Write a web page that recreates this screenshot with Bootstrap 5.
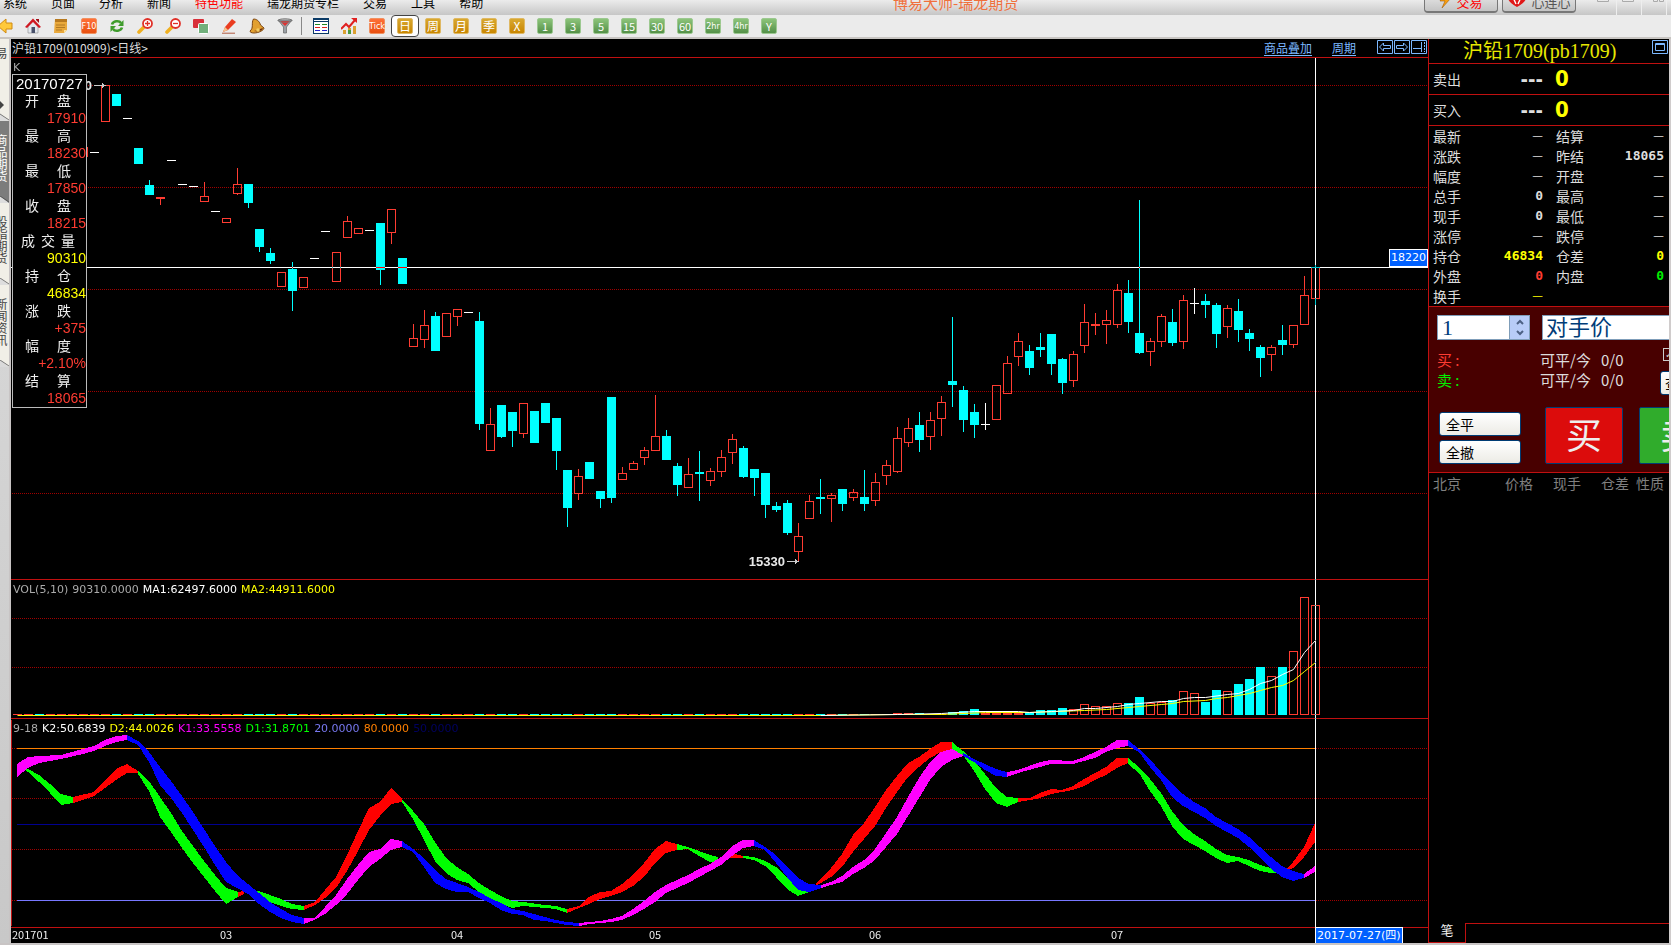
<!DOCTYPE html>
<html lang="zh-CN">
<head>
<meta charset="utf-8">
<meta name="viewport" content="width=device-width, initial-scale=1">
<title>博易大师-瑞龙期货</title>
<link href="https://cdn.jsdelivr.net/npm/bootstrap@5.3.0/dist/css/bootstrap.min.css" rel="stylesheet">
<style>
:root{--rule:#c01010;--up:#ff3c32;--down:#0ff;--cjk:"Noto Sans CJK SC",sans-serif;--tah:"DejaVu Sans","Noto Sans CJK SC",sans-serif}
body{font:12px/12px var(--cjk);background:#c8c4c4;color:#000;min-height:100vh;overflow:hidden}
button{border:0;background:none;padding:0;color:inherit;font:inherit}
svg{display:block;flex:none}
/* title and menu */
.menubar{height:15px;background:linear-gradient(#ececec,#c6c6c6);overflow:hidden}
.menubar nav{gap:24px;padding:0 0 6px 3px}
.menubar nav a{color:#000;text-decoration:none;white-space:nowrap}
.menubar nav a.hot{color:#f00}
.app-name{color:#f0703c;font-size:15px;line-height:16px;padding-bottom:4px;padding-left:4px}
.cap-btn{width:74px;height:26px;margin-bottom:2px;border:1px solid #777;border-bottom-width:2px;border-radius:4px;background:linear-gradient(#f4f4f4,#c4c4c4);font-size:13px;line-height:13px;padding-bottom:3px}
.win-btn{width:25px;height:15px;border-right:1px solid #eee}
/* toolbar */
.toolbar{height:24px;background:#ebebeb;border-bottom:2px solid #c8c5c2;padding-left:0;overflow:hidden}
.tool-row{margin-left:-9px}
.tool{width:28px;height:22px;display:flex;align-items:center;justify-content:center}
.tool-div{width:8px;height:18px;border-right:0}
.tool-div::before{content:"";display:block;width:1px;height:18px;margin-left:2px;background:#888}
.chip{width:16px;height:16px;border-radius:2px;color:#fff;display:flex;align-items:center;justify-content:center;font-size:12px;line-height:14px;background:linear-gradient(#d8a830,#c98600);border:1px solid #dfb863}
.chip.g{background:linear-gradient(#8cc47a,#549048);border-color:#9cc890;font-size:11px}
.chip.s{font:9px/14px "DejaVu Sans Condensed",sans-serif}
.chip.o{background:linear-gradient(#ff7038,#e85010);border-color:#f09060;font:9px/14px "DejaVu Sans Condensed",sans-serif}
.tool.active{border:1px solid #444;border-radius:4px;background:#fff}
/* left tabs */
.side{width:11px;border-right:2px solid #c8c4c4;background:linear-gradient(#dcdcdc,#c8c8c8);overflow:hidden}
.side button{display:flex;width:9px;height:82px;background:#f1efe7;color:#444;overflow:hidden;position:relative;align-items:center;justify-content:flex-end}
.side button span{writing-mode:vertical-rl;line-height:14px;margin-right:1px;margin-bottom:9px;text-orientation:upright}
.side button span.align-self-start{margin-top:8px}
.side button svg{position:absolute;left:0;bottom:0}
.side button.active{background:#7c7c7c;color:#fff}
/* charts */
.quote-area{background:#000;color:#ddd;overflow:hidden}
.chart-head{height:19px;border-bottom:1px solid var(--rule);padding-left:1px;line-height:17px}
.chart-head a{color:#7cb8ff;text-decoration:underline;text-underline-offset:2px}
.pane{border-bottom:1px solid var(--rule);overflow:hidden;position:relative}
.pane-vol{height:139px}.pane-kd{height:209px}.axis{height:15px}
.pane>svg,.axis>svg,.cross{width:100%;height:100%;shape-rendering:crispEdges}
.legend{position:absolute;left:2px;top:3px;font:11px/14px var(--tah);gap:4px}
.cross{position:absolute;left:0;top:0;mix-blend-mode:difference;pointer-events:none}
.tip{position:absolute;left:1px;top:16px;width:75px;border:1px solid #bbb;background:#000;margin:0}
.tip .day{font:15px/17px "Liberation Sans",sans-serif;color:#fff;padding-left:3px}
.tip dt{font:14px/17px var(--cjk);width:46px;margin:0 auto 0 12px;text-align-last:justify;color:#eee}
.tip dt.w3{width:54px;margin-left:8px}
.tip dd{font:14px/18px "Liberation Sans",sans-serif;margin:0;text-align:right;color:var(--up)}
.tip dd.y{color:#ff0}
.tag{position:absolute;background:#0060ff;color:#fff;border:1px solid #fff;font:11px/16px var(--tah);padding:0 1px}
/* quote panel */
.panel{width:243px;background:#000;border-left:1px solid var(--rule);border-right:2px solid #d0cccc;overflow:hidden;color:#ddd}
.panel h1{font:20px/20px "Liberation Serif","Noto Sans CJK SC",serif;color:#e8e800;margin:0;padding:2px 0 0 34px}
.ttl{height:25px;border-bottom:1px solid var(--rule)}
.ask{height:31px;border-bottom:1px solid var(--rule);font-size:14px;line-height:20px;padding-left:4px}
.ask b{font:bold 20px/28px "DejaVu Sans Condensed",sans-serif}
.ask .px{width:82px;text-align:right}
.ask .qty{color:#ff0;padding-left:12px;font-size:22px}
.quotes{width:100%;table-layout:fixed;border-bottom:1px solid var(--rule)}
.quotes th,.quotes td{height:20px;padding:0;font-size:14px;line-height:20px;font-weight:400}
.quotes th{padding-left:4px}
.quotes th+td+th{padding-left:13px}
.quotes td{text-align:right;font:bold 13px/20px "DejaVu Sans Mono",monospace}
.quotes td:last-child{padding-right:5px}
.quotes td i{display:inline-block;width:12px;font:12px/18px var(--cjk);overflow:hidden;vertical-align:top}
.y{color:#ff0}.r{color:var(--up)}.gr{color:#0e0}
.order{background:#480000;height:166px;border-bottom:1px solid var(--rule);padding-top:8px}
.order>div{width:320px;margin-left:8px}
.qtybox,.price{height:25px;border:1px solid #7f9db9;background:#fff;color:#003c78;border-radius:0;font:22px/22px "Liberation Serif","Noto Sans CJK SC",serif;padding:0 4px;appearance:none}
.qtybox{width:73px}.price{width:200px;margin-left:12px;padding:0 3px;outline:0}
.spin{width:20px;height:25px;background:#b8ccf8;border:1px solid #7f9db9;border-left:0}
.small-btn{height:24px;border:1px solid #003c74;border-radius:3px;background:linear-gradient(#fff,#ecebe5);color:#000;font-size:14px;line-height:20px;text-align:left;padding-left:6px}
.big-btn{width:78px;height:57px;border:1px solid #003c74;border-radius:2px;background:#dc0c0c;color:#eee;font:36px/44px "Noto Sans CJK SC",serif;padding-bottom:6px}
.big-btn.sell{background:#30ac2c}
.pos-col{padding-top:2px}
.pos{font-size:15px;line-height:20px;height:20px}
.auto-box{appearance:none;width:13px;height:13px;margin:0 0 10px 3px;border:1px solid #ccc;color:#ccc}
.auto-box:checked::after{content:"✓";display:block;font:bold 10px/11px "DejaVu Sans",sans-serif;padding-left:1px}
.ticks{width:235px;color:#808080}
.ticks th{font-weight:400;font-size:14px;line-height:21px;padding:0;text-align:right}
.foot{height:20px}
.foot button{width:37px;border-right:1px solid var(--rule);border-bottom:1px solid var(--rule);font-size:13px;color:#eee;padding-bottom:5px}
.foot div{border-top:1px solid var(--rule)}
</style>
</head>
<body class="d-flex flex-column vh-100">
<header class="menubar d-flex align-items-end flex-shrink-0">
  <nav class="d-flex"><a href="#">系统</a><a href="#">页面</a><a href="#">分析</a><a href="#">新闻</a><a href="#" class="hot">特色功能</a><a href="#">瑞龙期货专栏</a><a href="#">交易</a><a href="#">工具</a><a href="#">帮助</a></nav>
  <div class="app-name mx-auto">博易大师-瑞龙期货</div>
  <button class="cap-btn d-flex align-items-end justify-content-center gap-1"><svg width="13" height="16" viewBox="0 0 13 16"><path d="M7 0 1 9h5L3 16 12 6H7L10 0z" fill="#f9a010" stroke="#a65a00" stroke-width=".6"/></svg><span style="color:#f00">交易</span></button>
  <button class="cap-btn d-flex align-items-end justify-content-center gap-1 ms-1"><svg width="20" height="17" viewBox="0 0 20 17"><path d="M10 16C2 12-1 7 2 3c3-3 6-2 8 1 2-3 5-4 8-1 3 4 0 9-8 13z" fill="#e01818"/><path d="M5 4l4 9M15 4l-4 9M7 8l3-3 3 3" fill="none" stroke="#fff" stroke-width="1.4"/></svg><span style="color:#555">心连心</span></button>
  <div class="d-flex ms-3 pe-1">
    <button class="win-btn" aria-label="最小化"><svg width="24" height="15" viewBox="0 0 24 15"><path d="M5.500 0v1.500h11V0" fill="none" stroke="#aaa"/></svg></button>
    <button class="win-btn" aria-label="最大化"><svg width="24" height="15" viewBox="0 0 24 15"><path d="M5.500 0v1.500h11V0" fill="none" stroke="#aaa"/></svg></button>
    <button class="win-btn" aria-label="关闭"><svg width="24" height="15" viewBox="0 0 24 15"><path d="M11.500 0v1.500h4V0M17.500 0v1.500h4V0" fill="none" stroke="#aaa"/></svg></button>
  </div>
</header>

<div class="toolbar flex-shrink-0"><div class="tool-row d-flex">
  <button class="tool" aria-label="后退"><svg width="16" height="16" viewBox="0 0 16 16"><path d="M1 8l8-7v4h6v6H9v4z" fill="#ffc93a" stroke="#d08a10"/></svg></button>
  <button class="tool" aria-label="主页"><svg width="16" height="16" viewBox="0 0 16 16"><path d="M3 8l5-5 5 5v7H3z" fill="#e4e8ee" stroke="#888" stroke-width=".6"/><path d="M0 9l8-8.500L16 9l-2 1-6-6-6 6z" fill="#d01822"/><path d="M11 1h3v4l-3-3z" fill="#a01018"/><path d="M6.500 9h3.500v6H6.500z" fill="#48506a"/></svg></button>
  <button class="tool" aria-label="公告"><svg width="16" height="16" viewBox="0 0 16 16"><path d="M2 1h12v11l-3 3H1z" fill="#e9a93c"/><path d="M2 1h12v3H2z" fill="#b87a20"/><path d="M3 7h9M3 9.500h9M3 12h6" stroke="#b27a24"/><path d="M14 12h-3v3z" fill="#fbdf9b"/></svg></button>
  <button class="tool" aria-label="F10"><span class="chip o">F10</span></button>
  <button class="tool" aria-label="刷新"><svg width="16" height="16" viewBox="0 0 16 16"><path d="M3 6.500C4 3 10 2 12 5M13 9.500C12 13 6 14 4 11" fill="none" stroke="#3f9c2c" stroke-width="2.600"/><path d="M14.500 2v6H9zM1.500 14V8H7z" fill="#3f9c2c"/></svg></button>
  <button class="tool" aria-label="放大"><svg width="16" height="16" viewBox="0 0 16 16"><path d="M2 14l5-5" stroke="#f0b020" stroke-width="3.600" stroke-linecap="round"/><circle cx="10.500" cy="5.500" r="4.500" fill="#fff" stroke="#e03028" stroke-width="1.800"/><path d="M8 5.500h5M10.500 3v5" stroke="#e03028" stroke-width="1.300"/></svg></button>
  <button class="tool" aria-label="缩小"><svg width="16" height="16" viewBox="0 0 16 16"><path d="M2 14l5-5" stroke="#f0b020" stroke-width="3.600" stroke-linecap="round"/><circle cx="10.500" cy="5.500" r="4.500" fill="#fff" stroke="#e03028" stroke-width="1.800"/><path d="M8 5.500h5" stroke="#e03028" stroke-width="1.300"/></svg></button>
  <button class="tool" aria-label="叠加"><svg width="16" height="16" viewBox="0 0 16 16"><rect x="0" y="1" width="11" height="9" rx="1" fill="#d8303a"/><rect x="5.500" y="5.500" width="10" height="10" rx="1" fill="#72b07c" stroke="#fff"/></svg></button>
  <button class="tool" aria-label="画线"><svg width="16" height="16" viewBox="0 0 16 16"><path d="M2 14l2-5 7-8 4 3-8 8z" fill="#ea3c20"/><path d="M2 14l2-5 3 3z" fill="#f3c48c"/><path d="M1 15.200h13" stroke="#b05a40"/></svg></button>
  <button class="tool" aria-label="预警"><svg width="16" height="16" viewBox="0 0 16 16"><path d="M4.500 1c3 0 6 2 7 6l3.500 3c0 2-5 5-10 5-3 0-4-1-4-2 4-3 1-8 3.500-12z" fill="#e2a030" stroke="#7a4410"/><path d="M5 13c3-.5 6-2 9-3-1 3-5 4-9 3z" fill="#6a2c10"/><circle cx="9" cy="12" r="1.800" fill="#f4cd60"/></svg></button>
  <button class="tool" aria-label="筛选"><svg width="16" height="16" viewBox="0 0 16 16"><path d="M1 2l5.500 7v6h3V9L15 2z" fill="#9aa0a6" stroke="#666" stroke-width=".7"/><path d="M3 3h10L8 8z" fill="#e03030"/><ellipse cx="8" cy="2.500" rx="7" ry="1.700" fill="none" stroke="#777"/></svg></button>
  <span class="tool-div align-self-center"></span>
  <button class="tool" aria-label="报价"><svg width="16" height="16" viewBox="0 0 16 16" shape-rendering="crispEdges"><path d="M0 0h16v16H0z" fill="#0a3a66"/><path d="M1 4h14v11H1z" fill="#fff"/><path d="M1 2h14v1H1z" fill="#fff"/><path d="M2 6h5v1H2zM9 6h5v1H9z" fill="#282"/><path d="M2 9h5v1H2zM9 9h5v1H9z" fill="#d22"/><path d="M2 12h5v1H2zM9 12h5v1H9z" fill="#22c"/></svg></button>
  <button class="tool" aria-label="走势"><svg width="16" height="16" viewBox="0 0 16 16"><path d="M2 12h3v4H2zM7 10h3v6H7zM12 8h3v8h-3z" fill="#dba030"/><path d="M7 12h3v4H7z" fill="#4a9a40"/><path d="M0 11l5-5 3 3 6-7" fill="none" stroke="#e02020" stroke-width="2"/><path d="M10 0h6v5z" fill="#e02020"/></svg></button>
  <button class="tool" aria-label="Tick"><span class="chip o">Tick</span></button>
  <button class="tool active"><span class="chip">日</span></button>
  <button class="tool"><span class="chip">周</span></button>
  <button class="tool"><span class="chip">月</span></button>
  <button class="tool"><span class="chip">季</span></button>
  <button class="tool"><span class="chip">X</span></button>
  <button class="tool"><span class="chip g">1</span></button>
  <button class="tool"><span class="chip g">3</span></button>
  <button class="tool"><span class="chip g">5</span></button>
  <button class="tool"><span class="chip g">15</span></button>
  <button class="tool"><span class="chip g">30</span></button>
  <button class="tool"><span class="chip g">60</span></button>
  <button class="tool"><span class="chip g s">2hr</span></button>
  <button class="tool"><span class="chip g s">4hr</span></button>
  <button class="tool"><span class="chip g">Y</span></button>
</div></div>

<main class="d-flex flex-fill overflow-hidden" style="margin-bottom:2px">
  <aside class="side flex-shrink-0">
    <button><span class="align-self-start">易</span><svg width="9" height="20" viewBox="0 0 9 20"><path d="M0 0l4 4-4 4z" fill="#444"/><path d="M0 13v7h9z" fill="#ddd"/><path d="M0 13l9 6" stroke="#777"/></svg></button>
    <button class="active"><span>商品期货</span><svg width="9" height="7" viewBox="0 0 9 7"><path d="M0 0v7h9z" fill="#ddd"/><path d="M0 0l9 6" stroke="#555"/></svg></button>
    <button><span>股指期货</span><svg width="9" height="7" viewBox="0 0 9 7"><path d="M0 0v7h9z" fill="#ddd"/><path d="M0 0l9 6" stroke="#777"/></svg></button>
    <button><span>新闻资讯</span><svg width="9" height="7" viewBox="0 0 9 7"><path d="M0 0v7h9z" fill="#dadada"/><path d="M0 0l9 6" stroke="#777"/></svg></button>
  </aside>

  <section class="quote-area d-flex flex-column flex-fill">
    <div class="chart-head d-flex flex-shrink-0">
      <span>沪铅1709(010909)&lt;日线&gt;</span>
      <a href="#" class="ms-auto">商品叠加</a><a href="#" style="margin:0 21px 0 20px">周期</a>
      <svg width="51" height="17" viewBox="0 0 51 17" fill="none" stroke="#7cb8ff"><path d="M.5 1.500h15v13H.5zM17.500 1.500h15v13h-15zM34.500 1.500h15v13h-15zM2.500 8l4-4v2.500h7v3h-7V12zM30.500 8l-4-4v2.500h-7v3h7V12zM36 9.500h8M44.500 3v10"/><path d="M47.500 3v10" stroke-dasharray="2 1"/></svg>
    </div>
    <div class="d-flex flex-column flex-fill position-relative" style="isolation:isolate">
      <div class="pane flex-fill"><svg id="k"></svg><div class="legend"><span style="color:#aaa">K</span></div></div>
      <div class="pane pane-vol"><svg id="v"></svg>
        <div class="legend d-flex"><span style="color:#aaa">VOL(5,10)</span><span style="color:#aaa">90310.0000</span><span class="text-white">MA1:62497.6000</span><span class="y">MA2:44911.6000</span></div></div>
      <div class="pane pane-kd"><svg id="d"></svg>
        <div class="legend d-flex"><span style="color:#aaa">9-18</span><span class="text-white">K2:50.6839</span><span class="y">D2:44.0026</span><span style="color:#f0f">K1:33.5558</span><span style="color:#0f0">D1:31.8701</span><span style="color:#7878f0">20.0000</span><span style="color:#ff8000">80.0000</span><span style="color:#000060">50.0000</span></div></div>
      <div class="axis"><svg id="a"></svg></div>
      <svg class="cross"><path d="M0 209.500h1417M1304.500 0v869" stroke="#fff"/></svg>
      <dl class="tip">
        <div class="day">20170727</div>
        <dt>开 盘</dt><dd>17910</dd><dt>最 高</dt><dd>18230</dd><dt>最 低</dt><dd>17850</dd><dt>收 盘</dt><dd>18215</dd>
        <dt class="w3">成 交 量</dt><dd class="y">90310</dd><dt>持 仓</dt><dd class="y">46834</dd><dt>涨 跌</dt><dd>+375</dd><dt>幅 度</dt><dd>+2.10%</dd><dt>结 算</dt><dd>18065</dd>
      </dl>
      <span class="tag" style="right:0;top:191px">18220</span>
      <span class="tag" style="left:1304px;bottom:-2px">2017-07-27(四)</span>
    </div>
  </section>

  <aside class="panel d-flex flex-column flex-shrink-0">
    <div class="ttl d-flex flex-shrink-0"><h1 class="me-auto">沪铅1709(pb1709)</h1><svg width="17" height="17" viewBox="0 0 17 17" fill="none" stroke="#7cb8ff"><path d="M.5 1.500h15v13H.5zM3.500 4.500h9v7h-9zM3 5.500h10"/></svg></div>
    <div class="ask d-flex align-items-center flex-shrink-0"><span>卖出</span><b class="px">---</b><b class="qty">0</b></div>
    <div class="ask d-flex align-items-center flex-shrink-0"><span>买入</span><b class="px">---</b><b class="qty">0</b></div>
    <table class="quotes flex-shrink-0">
      <colgroup><col style="width:50px"><col style="width:64px"><col style="width:60px"><col></colgroup>
      <tr><th>最新</th><td><i>—</i></td><th>结算</th><td><i>—</i></td></tr>
      <tr><th>涨跌</th><td><i>—</i></td><th>昨结</th><td>18065</td></tr>
      <tr><th>幅度</th><td><i>—</i></td><th>开盘</th><td><i>—</i></td></tr>
      <tr><th>总手</th><td>0</td><th>最高</th><td><i>—</i></td></tr>
      <tr><th>现手</th><td>0</td><th>最低</th><td><i>—</i></td></tr>
      <tr><th>涨停</th><td><i>—</i></td><th>跌停</th><td><i>—</i></td></tr>
      <tr><th>持仓</th><td class="y">46834</td><th>仓差</th><td class="y">0</td></tr>
      <tr><th>外盘</th><td class="r">0</td><th>内盘</th><td class="gr">0</td></tr>
      <tr><th>换手</th><td class="y"><i>—</i></td><th></th><td></td></tr>
    </table>
    <form class="order flex-shrink-0">
      <div class="d-flex"><input class="qtybox" value="1" aria-label="手数"><span class="spin d-flex"><svg class="m-auto" width="8" height="17" viewBox="0 0 8 17" fill="none" stroke="#4d6185" stroke-width="2"><path d="M1 5l3-3 3 3M1 12l3 3 3-3"/></svg></span>
        <select class="price" aria-label="价格"><option>对手价</option></select></div>
      <div class="d-flex mt-2">
        <div class="pos-col" style="width:103px"><div class="pos r">买&nbsp;:</div><div class="pos gr">卖&nbsp;:</div></div>
        <div class="pos-col" style="width:120px"><div class="pos">可平/今&nbsp;&nbsp; 0/0</div><div class="pos">可平/今&nbsp;&nbsp; 0/0</div></div>
        <div class="d-flex flex-column"><input type="checkbox" class="auto-box" checked aria-label="自动"><button type="button" class="small-btn" style="width:48px;padding-left:4px">查委</button></div>
      </div>
      <div class="d-flex" style="margin-top:12px;padding-left:2px">
        <div class="d-flex flex-column gap-1" style="padding-top:5px;width:82px"><button type="button" class="small-btn">全平</button><button type="button" class="small-btn">全撤</button></div>
        <button type="button" class="big-btn" style="margin:0 16px 0 24px">买</button><button type="button" class="big-btn sell">卖</button>
      </div>
    </form>
    <table class="ticks"><colgroup><col style="width:32px"><col style="width:72px"><col style="width:48px"><col style="width:48px"><col></colgroup><tr><th>北京</th><th>价格</th><th>现手</th><th>仓差</th><th>性质</th></tr></table>
    <div class="foot d-flex mt-auto"><button>笔</button><div class="flex-fill"></div></div>
  </aside>
</main>

<script>
// Bar layout: one bar every 11px, chart origin at screen (11, 58)
const X = i => 6 + 11 * i, UP = '#ff3c32', DN = '#00ffff';
// [kind, bodyTop, bodyBottom, high, low]; kind r = up, c = down, w = unchanged
const bars = `w 150;w 150;c 150 152;w 150;w 150;w 150;r 147 157;w 152;r 85 122;c 94 106;w 118;c 148 164;c 185 195 180;r 197 199 197 205;w 160;w 184;w 186;r 196 202 182;w 211;r 218 223;r 184 194 168 195;c 184 203 184 208;c 229 247 229 252;c 253 261 248 264;r 272 287;c 269 291 262 311;r 277 288;w 258;w 231;r 252 282;r 221 238 216;r 228 234;w 230;c 223 270 223 285;r 209 233 209 244;c 258 284;r 338 347 324;r 325 340 310 348;c 316 351 312;r 313 337;r 309 317 309 326;w 312;c 321 424 312 430;r 424 451 408;c 405 437 405 438;c 412 431 412 447;r 403 434 403 438;c 411 443;c 403 423;c 418 451 418 470;c 470 508 470 527;r 476 494 469 500;c 462 479;c 491 499 491 508;c 397 498 397 503;r 473 480 467;r 463 470 461;r 450 458 447 465;r 436 451 395;c 436 460 430;c 466 485 463 496;r 474 488 458;c 472 474 451 501;r 471 481 468 486;r 457 472 450 477;r 439 453 434 464;c 448 477 446 478;c 469 478 469 496;c 473 505 473 518;c 506 510 502 512;c 503 533 500 535;r 536 552 523 562;r 501 519 495;c 497 499 479 514;r 495 499 493 522;c 489 504 489 511;r 492 498 489 501;c 497 504 470 511;r 482 501 473 506;r 465 476 460 485;r 438 472 427 473;r 428 443 418 447;c 425 440 412 452;r 420 437 412 450;r 402 419 396 436;c 381 385 317 407;c 390 420 386 432;c 412 425 404 438;w 424 424 403 430;r 385 420;r 363 394 356;r 341 357 333 366;c 351 368 345 375;c 347 350 333 357;c 334 364 334 375;c 359 383 358 394;r 354 381 351 387;r 322 346 304 353;r 324 326 313 335;r 320 325 310 344;r 290 325 284 328;c 293 322 280 333;c 333 353 200 354;r 341 352 338 366;r 316 342 314 347;c 322 343 309 346;r 300 342 295 349;w 303 303 288 314;c 301 305 294 318;c 305 334 303 348;r 308 327 305 338;c 311 330 299 342;c 333 339 329 351;c 347 358 345 377;r 347 355 345 371;c 340 345 325 355;r 325 345 325 348;r 295 325 276;r 267 299 265 305`
  .split(';').map(s => { const p = s.split(' '); return [p[0], ...p.slice(1).map(Number)]; });
const rect = (x, y, w, h, c) => `<rect x="${x}" y="${y}" width="${w}" height="${h}" fill="${c}"/>`;
const frame = (x, t, b) => `<rect x="${x - 3.5}" y="${t + .5}" width="8" height="${Math.max(b - t - 1, 1)}" fill="none" stroke="${UP}"/>`;
const grid = ys => ys.map(y => `<path d="M1 ${y + .5}H4000" stroke="#a00000" stroke-dasharray="1 1"/>`).join('');
const put = (id, dy, s) => document.getElementById(id).innerHTML = `<g transform="translate(0,${-dy})">${s}</g>`;

let k = grid([85, 187, 289, 391, 493]);
bars.forEach(([t, a, b, h, l], i) => {
  const x = X(i); b = b ?? a; h = h ?? a; l = l ?? b;
  const c = t === 'r' ? UP : t === 'c' ? DN : '#fff';
  if (t === 'w') { k += rect(x - 4, a, 9, 1, c); if (l > h) k += rect(x, h, 1, l - h, c); return; }
  if (h < a) k += rect(x, h, 1, a - h, c);
  if (l > b) k += rect(x, b, 1, l - b, c);
  k += t === 'c' ? rect(x - 4, a, 9, b - a, c) : frame(x, a, b);
});
const arrow = (x, y) => `<path d="M${x} ${y + .5}h11" stroke="#ccc"/><path d="M${x + 8} ${y - 2}l4 2.500-4 2.500z" fill="#ccc"/>`;
const lab = 'font-family="Liberation Sans" font-size="13" font-weight="bold" fill="#e8e8e8" text-anchor="end"';
k += arrow(83, 85) + arrow(776, 561) + `<text x="81" y="90" ${lab}>0</text><text x="774" y="566" ${lab}>15330</text>`;
put('k', 58, k);

// Volume: tops for bars 80..118, everything earlier is a one-pixel bar
const tops = [713,713,713,714,714,712,711,709,713,713,713,713,713,710,710,708,709,704,706,706,703,703,697,703,702,700,691,693,702,690,691,684,679,667,676,667,651,597,605];
const volDown = { 80: 0, 92: 1, 113: 1, 114: 0, 107: 0, 106: 0, 110: 0 };
let v = grid([618, 667]);
bars.forEach(([t], i) => {
  const top = i < 80 ? 714 : tops[i - 80], dn = volDown[i] ?? (t === 'c');
  v += top > 712 || dn ? rect(X(i) - 4, top, 9, 715 - top, dn ? DN : UP) : frame(X(i), top, 715);
});
const line = (c, pts) => `<polyline shape-rendering="auto" fill="none" stroke="${c}" points="${pts.map(([i, y]) => X(i) + .5 + ',' + (y + .5)).join(' ')}"/>`;
v += line('#ffff00', [[0,715],[73,715],[80,714],[84,714],[88,712],[92,712],[97,710],[99,709],[101,707],[102,706],[104,704],[105,703],[106,701],[108,700],[109,698],[110,697],[111,695],[112,693],[113,690],[114,687],[115,685],[116,680],[117,671],[118,662]]);
v += line('#ffffff', [[73,715],[80,714],[84,713],[87,711],[91,711],[92,712],[94,711],[96,710],[97,708],[98,708],[100,706],[101,704],[102,703],[104,701],[105,701],[106,698],[107,697],[108,697],[110,694],[111,693],[112,689],[113,683],[114,680],[115,674],[116,669],[117,652],[118,640]]);
put('v', 580, v);

// Stochastic ribbons: x, upper edge, lower edge
const G = '#00ff00', R = '#ff0000', M = '#ff00ff', B = '#0000ff';
const ribbons = [
[G,'25 768 769 28 769 771 39 775 781 50 784 792 61 794 804 73 797 802'],
[R,'73 797 802 94 792 795 105 780 787 116 769 779 127 764 772 138 771 772'],
[G,'138 771 773 149 781 790 160 797 816 171 813 831 182 831 847 193 846 862 204 861 876 215 875 890 226 888 903 238 892 896'],
[R,'238 892 896 244 891 893'],
[G,'248 890 892 259 891 893 270 895 901 281 899 905 292 904 908 304 906 909'],
[R,'304 906 909 315 902 904 325 890 897 336 877 887 347 855 870 358 831 850 369 808 829 380 802 815 391 788 803 402 799 801'],
[G,'402 799 801 413 811 818 424 824 839 435 842 860 446 858 872 457 867 879 468 874 882 479 883 891 490 890 898 501 896 903 512 901 907 523 902 905 545 905 907 556 906 908 567 909 912'],
[R,'567 909 912 579 906 907 589 897 903 600 892 898 611 891 895 622 884 891 633 875 885 644 863 876 655 849 862 666 841 852 677 844 849'],
[G,'677 844 849 688 847 848 699 851 855 710 855 861 718 857 860'],
[R,'728 855 857 735 854 857 743 856 857'],
[G,'743 856 857 754 857 859 765 861 865 776 867 876 787 878 888 798 889 895 809 890 891'],
[R,'816 883 885 831 868 876 842 854 866 853 835 851 864 823 838 875 807 825 886 790 807 897 776 791 908 763 776 919 757 766 930 749 757 941 742 751 952 742 748'],
[M,'17 764 776 28 757 767 39 756 762 61 755 758 83 749 753 94 746 750 105 740 745 116 736 741 127 735 739'],
[B,'127 735 739 138 741 744 149 752 761 160 767 784 171 781 797 182 796 812 193 812 829 204 829 846 215 846 864 226 862 881 237 875 887 248 884 893 259 893 903 270 902 911 281 909 917 292 915 921 304 918 923'],
[M,'304 918 923 314 918 919 325 907 913 336 895 904 347 879 893 358 865 879 369 852 866 380 849 858 391 839 849 402 841 846'],
[B,'402 841 846 413 849 851 424 858 866 435 870 882 446 879 888 457 883 891 468 887 891 479 892 897 490 898 902 501 903 909 512 909 913 523 911 914 534 914 919 545 917 920 556 920 922 567 922 924 579 923 925'],
[M,'579 923 925 589 922 923 600 921 922 611 919 921 622 916 919 633 909 914 644 901 908 655 892 901 666 885 892 677 880 887 688 875 882 699 869 876 710 864 870 721 857 864 732 846 855 743 840 847 754 840 845'],
[B,'754 840 845 765 847 849 776 855 862 787 867 876 798 878 889 809 884 891 821 885 887'],
[M,'821 885 887 831 882 884 842 876 881 853 867 873 864 860 867 875 849 859 886 833 846 897 817 833 908 797 815 919 778 797 930 762 779 941 752 766 952 749 759 963 753 755'],
[G,'952 742 748 963 751 754 974 760 770 985 774 788 996 788 802 1007 797 806 1018 798 801'],
[R,'1018 798 801 1030 798 799 1040 793 797 1051 789 793 1062 790 791 1073 786 789 1084 779 785 1095 773 779 1106 767 774 1117 758 767 1128 758 762'],
[G,'1128 758 763 1139 767 772 1150 779 790 1161 793 805 1172 811 825 1183 825 838 1194 834 844 1205 841 850 1216 849 857 1227 855 862 1238 857 860 1249 860 865 1260 865 870 1271 868 872 1280 870 872'],
[R,'1287 868 869 1293 862 867 1304 847 856 1315 823 841'],
[B,'963 753 755 974 759 761 985 764 769 996 769 775 1007 772 776'],
[M,'1007 772 776 1018 770 772 1029 766 769 1040 762 766 1051 760 763 1073 761 763 1084 757 760 1095 752 757 1106 747 751 1117 740 747 1128 740 745'],
[B,'1128 740 745 1139 749 751 1150 759 766 1161 772 779 1172 784 796 1183 794 805 1194 802 811 1205 808 817 1216 817 825 1227 823 831 1238 829 837 1249 837 846 1260 847 857 1271 857 868 1282 866 876 1293 871 880 1304 874 877'],
[M,'1304 874 877 1315 866 871']];
let d = grid([748, 798, 849, 900]) + rect(0, 720, 1, 206, '#c01010');
[[748, '#ff8000'], [824, '#000090'], [900, '#7878ff']].forEach(([y, c]) => d += rect(6, y, 1298, 1, c));
ribbons.forEach(([c, s]) => {
  const n = s.split(' ').map(Number), up = [], lo = [];
  for (let j = 0; j < n.length; j += 3) { up.push(`${n[j] - 11},${n[j + 1]}`); lo.unshift(`${n[j] - 11},${n[j + 2] + 1}`); }
  d += `<polygon points="${up.concat(lo).join(' ')}" fill="${c}"/>`;
});
put('d', 719, d);

put('a', 0, [['201701', 1], ['03', 209], ['04', 440], ['05', 638], ['06', 858], ['07', 1100]]
  .map(([t, x]) => `<text x="${x}" y="11" font-family="Noto Sans CJK SC" font-size="11" fill="#eee">${t}</text>`).join(''));
</script>
<script src="https://cdn.jsdelivr.net/npm/bootstrap@5.3.0/dist/js/bootstrap.bundle.min.js"></script>
</body>
</html>
